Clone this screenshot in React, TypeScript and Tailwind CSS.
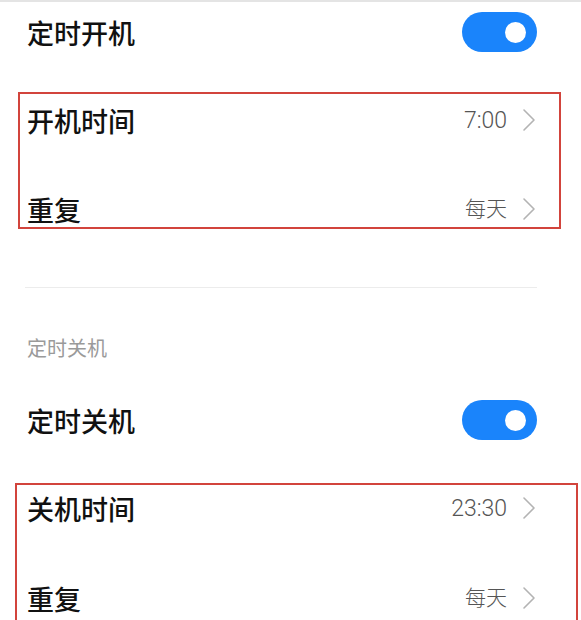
const FONT = { fontFamily: '"Noto Sans CJK SC", "Noto Sans", sans-serif' }
const VALUE_FONT = { fontFamily: 'Roboto, "Noto Sans CJK SC", sans-serif' }

function Toggle() {
  return (
    <div className="flex h-[40px] w-[75px] items-center justify-end rounded-full bg-[#1a84fb] pr-[11px]">
      <div className="h-[21px] w-[21px] rounded-full bg-white" />
    </div>
  )
}

function Chevron() {
  return (
    <svg width="14" height="24" viewBox="0 0 14 24" fill="none">
      <path d="M2 2 L12 12 L2 22" stroke="#b3b3b3" strokeWidth="1.6" strokeLinecap="round" strokeLinejoin="round" />
    </svg>
  )
}

function SwitchRow({ label }: { label: string }) {
  return (
    <div className="flex h-[60px] items-center justify-between pl-[27px] pr-[44px]">
      <span className="text-[27px] font-medium leading-none text-[#111]">{label}</span>
      <Toggle />
    </div>
  )
}

function LinkRow({ label, value, small }: { label: string; value: string; small?: boolean }) {
  return (
    <div className="flex h-[36px] items-center justify-between">
      <span className="text-[27px] font-medium leading-none text-[#111]">{label}</span>
      <div className="flex items-center gap-[15px]">
        <span
          className={small ? "text-[21px] font-light leading-none text-[#555]" : "text-[23px] font-light leading-none text-[#555]"}
          style={VALUE_FONT}
        >
          {value}
        </span>
        <Chevron />
      </div>
    </div>
  )
}

export default function App() {
  return (
    <div className="h-[620px] w-[581px] overflow-hidden border-t-2 border-[#e4e4e4] bg-white" style={FONT}>
      <SwitchRow label="定时开机" />

      <div className="ml-[18px] mr-[20px] mt-[30px] flex h-[137px] flex-col border-2 border-[#d2443c] pl-[7px] pr-[23px] pt-[8px]">
        <LinkRow label="开机时间" value="7:00" />
        <div className="mt-[53px]">
          <LinkRow label="重复" value="每天" small />
        </div>
      </div>

      <div className="ml-[25px] mr-[44px] mt-[58px] h-px bg-[#ececec]" />

      <div className="mt-[48px] pl-[27px] text-[20px] leading-[24px] text-[#9a9a9a]">定时关机</div>

      <div className="mt-[30px]">
        <SwitchRow label="定时关机" />
      </div>

      <div className="ml-[15px] mr-[3px] mt-[33px] flex h-[200px] flex-col border-2 border-[#d2443c] pl-[10px] pr-[40px] pt-[5px]">
        <LinkRow label="关机时间" value="23:30" />
        <div className="mt-[54px]">
          <LinkRow label="重复" value="每天" small />
        </div>
      </div>
    </div>
  )
}
